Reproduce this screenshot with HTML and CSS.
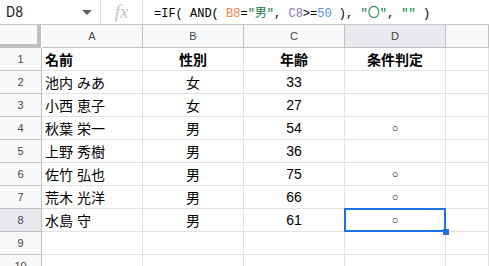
FILE: index.html
```html
<!DOCTYPE html>
<html lang="ja">
<head>
    <meta charset="UTF-8">
    <title>条件判定</title>
    <link rel="stylesheet" href="styles.css">
</head>
<body>
    <div class="formula-bar">
        <div class="name-box">
            <span>D8</span>
            <span class="caret"></span>
        </div>
        <div class="fx">fx</div>
        <div class="formula">=IF( AND( <span class="ref-b">B8</span>=<span class="str">"男"</span>, <span class="ref-c">C8</span>&gt;=<span class="num">50</span> ), <span class="str">"〇"</span>, <span class="str">""</span> )</div>
    </div>

    <div class="sheet">
        <div class="corner"></div>
        <div class="col-head">A</div>
        <div class="col-head">B</div>
        <div class="col-head">C</div>
        <div class="col-head active">D</div>
        <div class="col-head"></div>

        <div class="row-head">1</div>
        <div class="cell bold">名前</div>
        <div class="cell bold center">性別</div>
        <div class="cell bold center">年齢</div>
        <div class="cell bold center">条件判定</div>
        <div class="cell"></div>

        <div class="row-head">2</div>
        <div class="cell">池内 みあ</div>
        <div class="cell center">女</div>
        <div class="cell center num-cell">33</div>
        <div class="cell center"></div>
        <div class="cell"></div>

        <div class="row-head">3</div>
        <div class="cell">小西 恵子</div>
        <div class="cell center">女</div>
        <div class="cell center num-cell">27</div>
        <div class="cell center"></div>
        <div class="cell"></div>

        <div class="row-head">4</div>
        <div class="cell">秋葉 栄一</div>
        <div class="cell center">男</div>
        <div class="cell center num-cell">54</div>
        <div class="cell center mark">○</div>
        <div class="cell"></div>

        <div class="row-head">5</div>
        <div class="cell">上野 秀樹</div>
        <div class="cell center">男</div>
        <div class="cell center num-cell">36</div>
        <div class="cell center"></div>
        <div class="cell"></div>

        <div class="row-head">6</div>
        <div class="cell">佐竹 弘也</div>
        <div class="cell center">男</div>
        <div class="cell center num-cell">75</div>
        <div class="cell center mark">○</div>
        <div class="cell"></div>

        <div class="row-head">7</div>
        <div class="cell">荒木 光洋</div>
        <div class="cell center">男</div>
        <div class="cell center num-cell">66</div>
        <div class="cell center mark">○</div>
        <div class="cell"></div>

        <div class="row-head active">8</div>
        <div class="cell">水島 守</div>
        <div class="cell center">男</div>
        <div class="cell center num-cell">61</div>
        <div class="cell center mark selected">○</div>
        <div class="cell"></div>

        <div class="row-head">9</div>
        <div class="cell"></div>
        <div class="cell"></div>
        <div class="cell"></div>
        <div class="cell"></div>
        <div class="cell"></div>

        <div class="row-head">10</div>
        <div class="cell"></div>
        <div class="cell"></div>
        <div class="cell"></div>
        <div class="cell"></div>
        <div class="cell"></div>
    </div>
</body>
</html>
```

FILE: styles.css
```css
body {
    margin: 0;
    background-color: #ffffff;
    font-family: 'Liberation Sans', Arial, 'Noto Sans CJK JP', sans-serif;
    color: #000000;
    overflow: hidden;
}

/* formula bar */
.formula-bar {
    display: flex;
    align-items: center;
    height: 24px;
    border-bottom: 1px solid #c7c7c7;
}
.name-box {
    display: flex;
    align-items: center;
    justify-content: space-between;
    width: 86px;
    padding: 0 8px 0 6px;
    height: 100%;
    font-family: Roboto, 'Liberation Sans', sans-serif;
    font-size: 14px;
    color: #202124;
    border-right: 1px solid #e0e0e0;
    box-sizing: content-box;
}
.caret {
    width: 0;
    height: 0;
    border-left: 5px solid transparent;
    border-right: 5px solid transparent;
    border-top: 5px solid #5f6368;
}
.fx {
    width: 42px;
    height: 100%;
    display: flex;
    align-items: center;
    justify-content: center;
    font-family: 'Liberation Serif', serif;
    font-style: italic;
    font-size: 19px;
    color: #c4c4c4;
    border-right: 1px solid #e0e0e0;
    box-sizing: border-box;
}
.formula {
    padding-left: 11px;
    font-family: 'Liberation Mono', 'Noto Sans CJK JP', monospace;
    font-size: 12px;
    color: #000000;
    white-space: pre;
}
.ref-b { color: #f7813f; }
.ref-c { color: #8e6fc8; }
.num { color: #5b8fe8; }
.str { color: #0b8043; }

/* grid */
.sheet {
    display: grid;
    grid-template-columns: 42px 101px 101px 101px 101px 43px;
    grid-template-rows: 23px repeat(10, 23px);
}
.corner {
    background-color: #f8f9fa;
    border-right: 4px solid #c0c0c0;
    border-bottom: 4px solid #c0c0c0;
    margin-right: 1px;
}
.col-head {
    background-color: #f8f9fa;
    border-right: 1px solid #c0c0c0;
    border-bottom: 1px solid #c0c0c0;
    font-size: 11px;
    color: #444746;
    display: flex;
    align-items: center;
    justify-content: center;
}
.row-head {
    background-color: #f8f9fa;
    border-right: 1px solid #c0c0c0;
    border-bottom: 1px solid #c0c0c0;
    font-size: 11px;
    color: #444746;
    display: flex;
    align-items: center;
    justify-content: center;
}
.col-head.active,
.row-head.active {
    background-color: #e8eaed;
}
.cell {
    position: relative;
    border-right: 1px solid #e2e2e2;
    border-bottom: 1px solid #e2e2e2;
    font-family: 'Liberation Sans', 'Noto Sans CJK JP', sans-serif;
    font-size: 14px;
    display: flex;
    align-items: center;
    padding-left: 3px;
    white-space: nowrap;
    overflow: visible;
}
.cell.center {
    justify-content: center;
    padding-left: 0;
}
.cell.bold {
    font-weight: bold;
}
.mark {
    font-size: 11px;
}
.selected::after {
    content: "";
    position: absolute;
    left: -1px;
    top: -1px;
    right: -1px;
    bottom: -1px;
    border: 2px solid #1a73e8;
}
.selected::before {
    content: "";
    position: absolute;
    right: -4px;
    bottom: -4px;
    width: 6px;
    height: 6px;
    background-color: #1a73e8;
    z-index: 1;
}
```
